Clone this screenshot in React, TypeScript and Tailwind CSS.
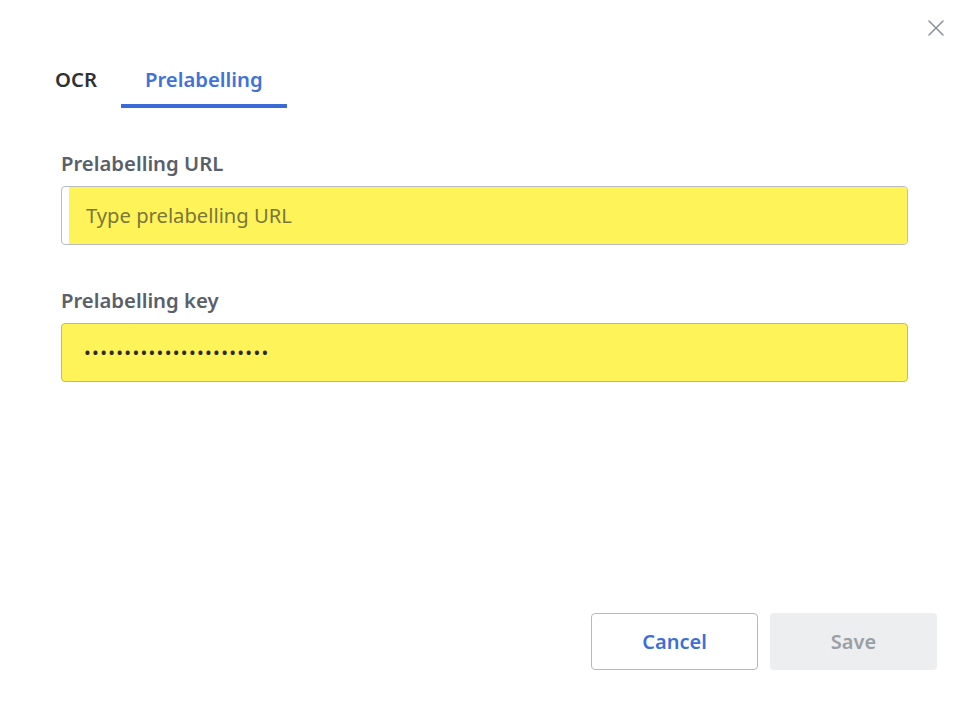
import { X } from "lucide-react";

const font = { fontFamily: '"Noto Sans", "Open Sans", sans-serif' };

function Tab({ label, active }: { label: string; active?: boolean }) {
  return (
    <div
      className={`flex h-[53px] items-center border-b-4 px-6 text-[20.3px] font-semibold ${
        active
          ? "border-[#3a6bd6] text-[#4272d8]"
          : "border-transparent text-[#2e3237]"
      }`}
    >
      {label}
    </div>
  );
}

function Field({
  label,
  children,
}: {
  label: string;
  children: React.ReactNode;
}) {
  return (
    <div>
      <div className="text-[20.3px] font-semibold leading-[26px] text-[#59606a]">
        {label}
      </div>
      <div className="mt-[10px]">{children}</div>
    </div>
  );
}

export default function App() {
  return (
    <div className="flex h-[703px] w-[967px] flex-col bg-white" style={font}>
      <div className="flex justify-end pr-[17px] pt-[14px]">
        <X size={28} strokeWidth={1.3} className="text-[#8d929a]" />
      </div>

      <div className="mt-[13px] flex pl-[31px]">
        <Tab label="OCR" />
        <Tab label="Prelabelling" active />
      </div>

      <div className="mt-[42px] flex flex-col gap-[42px] pl-[61px] pr-[59px]">
        <Field label="Prelabelling URL">
          <div className="flex h-[59px] overflow-hidden rounded-[4px] border border-[#b9bcc1] bg-white">
            <div className="w-[7px]" />
            <div className="flex flex-1 items-center bg-[#fff35a] pl-[17px] text-[20.2px] text-[#78773c]">
              Type prelabelling URL
            </div>
          </div>
        </Field>
        <Field label="Prelabelling key">
          <div className="flex h-[59px] items-center rounded-[4px] border border-[#c4bd5a] bg-[#fff35a] pl-[22px] text-[18px] tracking-[1.3px] text-[#2a291c]">
            •••••••••••••••••••••••
          </div>
        </Field>
      </div>

      <div className="mt-auto mb-[33px] flex justify-end gap-[12px] pr-[30px]">
        <button className="h-[57px] w-[167px] rounded-[4px] border border-[#b4b9c2] bg-white text-[20px] font-semibold text-[#3d6fd8]">
          Cancel
        </button>
        <button className="h-[57px] w-[167px] rounded-[4px] bg-[#eceef0] text-[20px] font-semibold text-[#9a9fa6]">
          Save
        </button>
      </div>
    </div>
  );
}
